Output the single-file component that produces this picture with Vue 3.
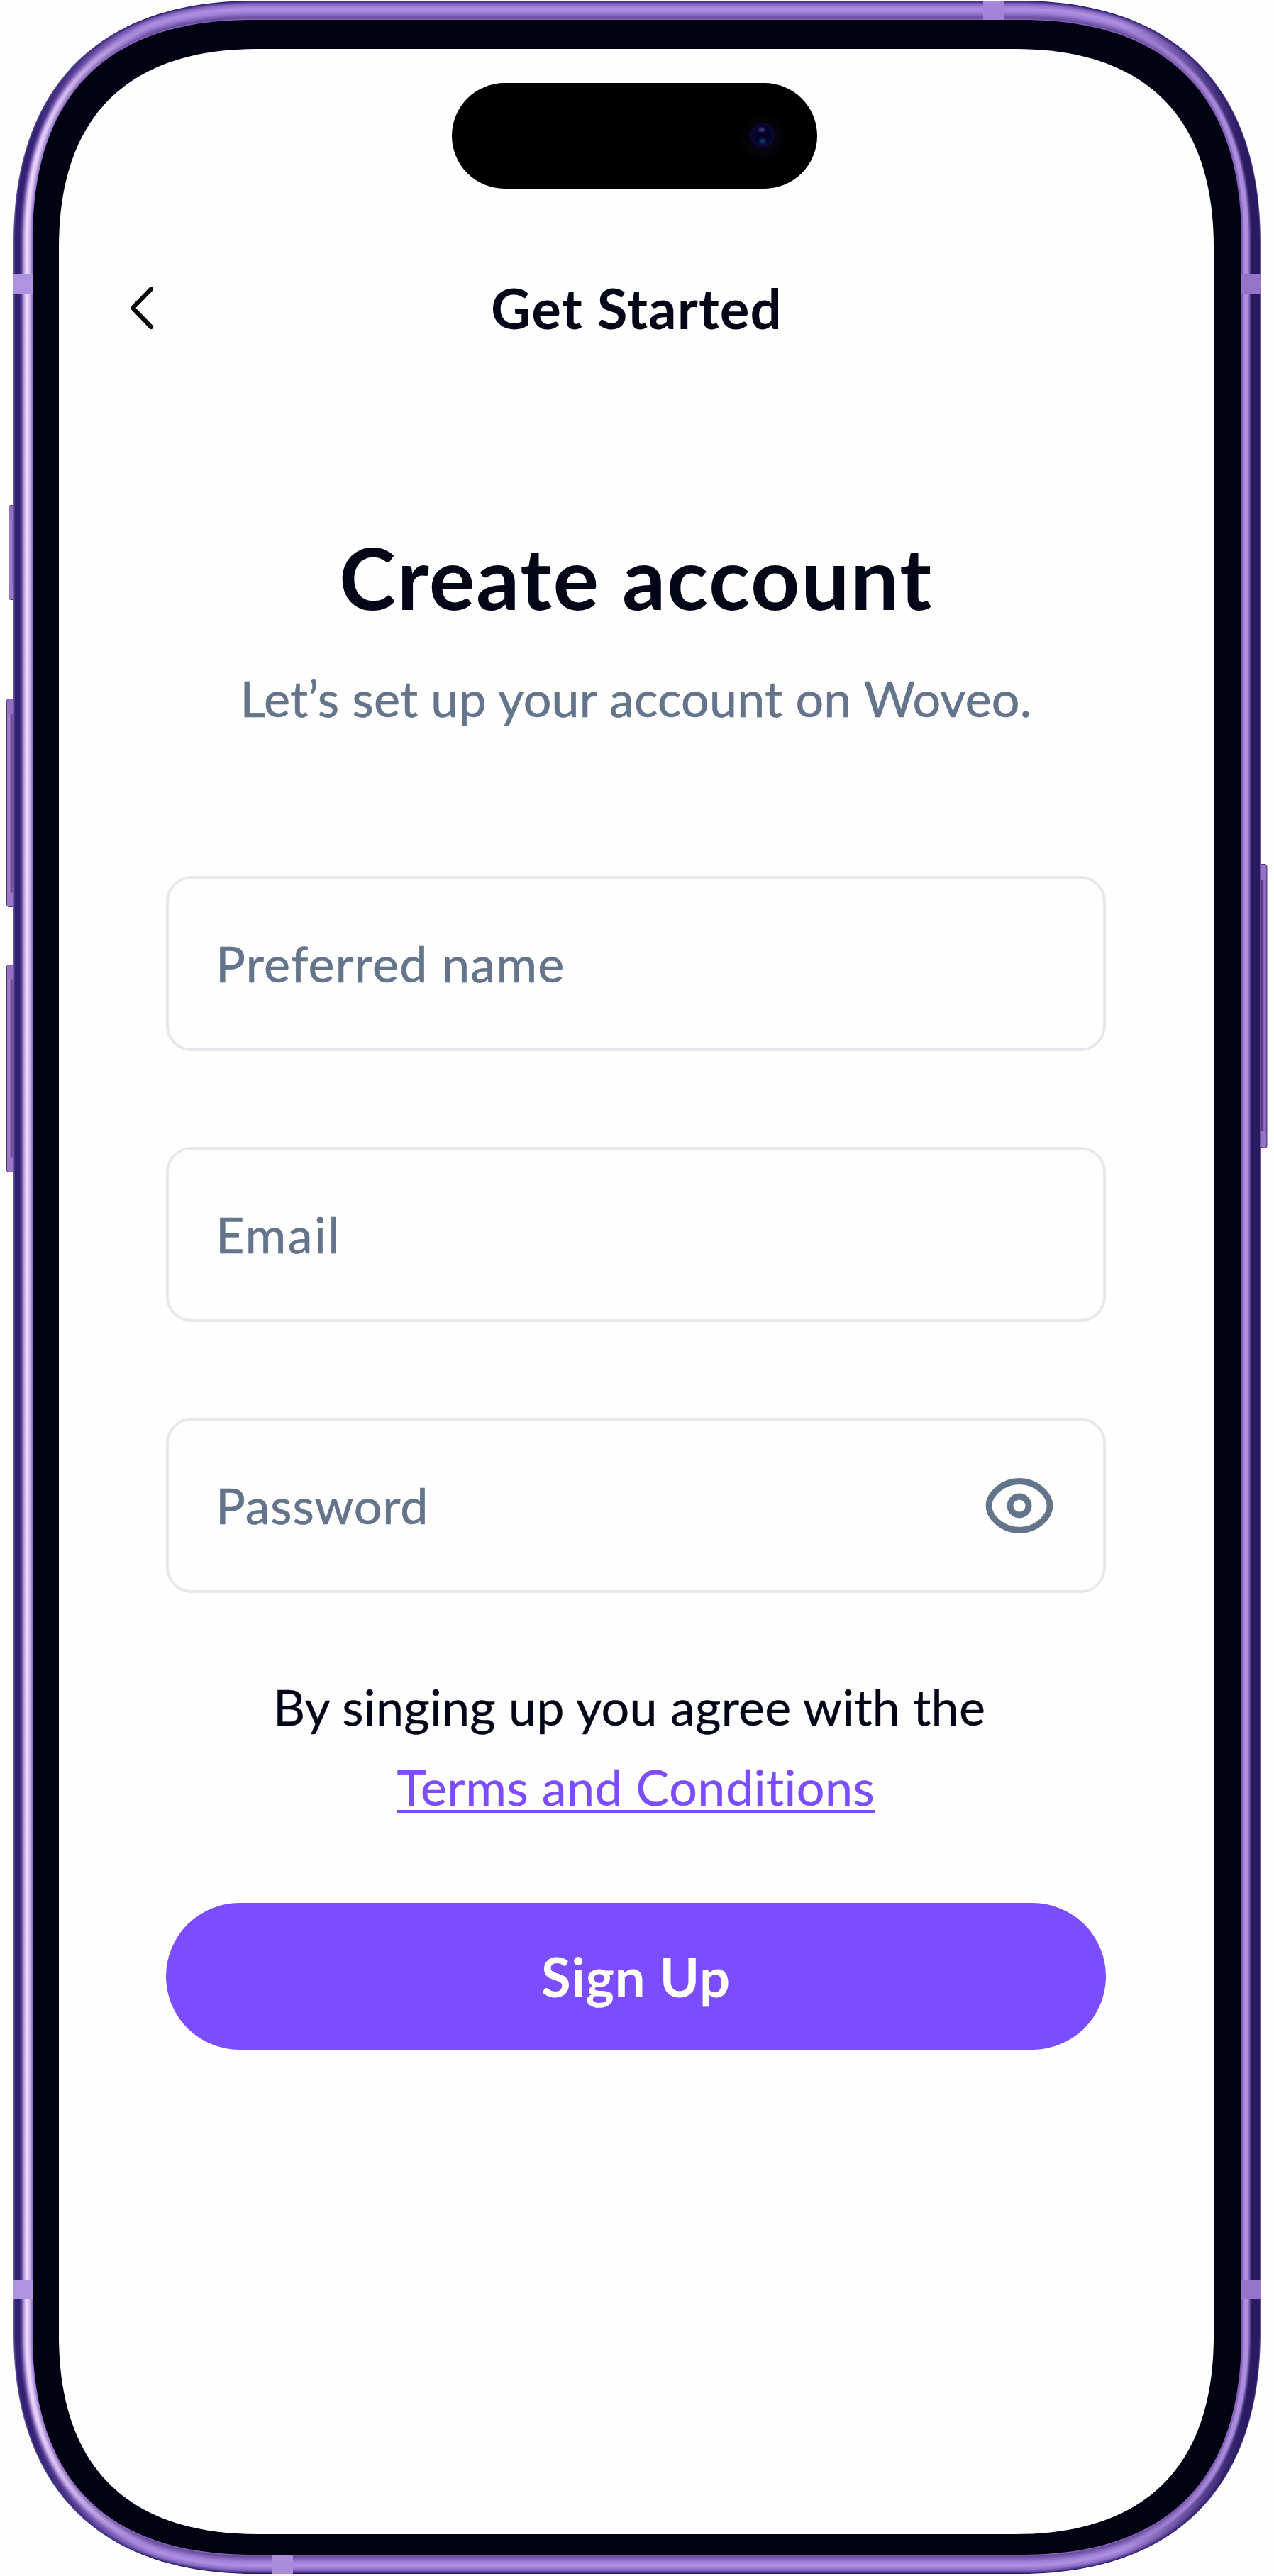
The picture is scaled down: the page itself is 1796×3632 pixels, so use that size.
<script setup>
const W = 1796
const H = 3632

// Rounded outline with continuous-curvature corners.
function outline(l, t, r, b, len, c) {
  return [
    `M${l} ${t + len}C${l} ${t + c} ${l + c} ${t} ${l + len} ${t}`,
    `H${r - len}C${r - c} ${t} ${r} ${t + c} ${r} ${t + len}`,
    `V${b - len}C${r} ${b - c} ${r - c} ${b} ${r - len} ${b}`,
    `H${l + len}C${l + c} ${b} ${l} ${b - c} ${l} ${b - len}Z`,
  ].join('')
}

// Metal tones from the outer edge inwards: [depth, r, g, b].
const leftTones = [[0, 100, 84, 165], [2, 50, 34, 112], [8, 50, 34, 116], [11, 96, 70, 155], [14, 175, 145, 215], [17, 234, 214, 250], [20, 234, 214, 250], [23, 198, 168, 235], [26, 150, 115, 200]]
const rightTones = [[0, 100, 80, 155], [1, 42, 26, 98], [12, 42, 26, 98], [15, 110, 85, 165], [17, 172, 140, 222], [22, 174, 142, 222], [24, 138, 106, 190], [26, 125, 92, 178]]
const capTones = [[0, 44, 29, 107], [2, 90, 66, 156], [5, 139, 108, 197], [11, 176, 144, 226], [16, 160, 130, 214], [20, 132, 102, 188], [24, 104, 74, 156], [26, 134, 102, 188]]

function tone(list, d) {
  for (let i = 1; i < list.length; i++) {
    if (d <= list[i][0]) {
      const a = list[i - 1]
      const b = list[i]
      const k = (d - a[0]) / (b[0] - a[0])
      return `rgb(${[1, 2, 3].map((n) => Math.round(a[n] + (b[n] - a[n]) * k)).join(',')})`
    }
  }
  return `rgb(${list[list.length - 1].slice(1).join(',')})`
}

const layers = Array.from({ length: 27 }, (_, d) => ({
  id: `metal${d}`,
  d: outline(19 + d, 1 + d, 1777 - d, 3629 - d, 340 - d * 1.1, 121 - d * 0.6),
  left: tone(leftTones, d),
  cap: tone(capTones, d),
  right: tone(rightTones, d),
}))
const bezel = outline(46, 28, 1750, 3602, 310, 105)
const screen = outline(83, 69, 1711, 3573, 280, 96)
const keys = [
  { x: 12.5, y: 712.5, h: 133 },
  { x: 9.5, y: 985.5, h: 293 },
  { x: 9.5, y: 1360.5, h: 292 },
]

const fields = [
  { label: 'Preferred name', name: 'name' },
  { label: 'Email', name: 'email' },
  { label: 'Password', name: 'password', eye: true },
]
</script>

<template>
  <main class="phone">
    <svg class="shell" :viewBox="`0 0 ${W} ${H}`" :width="W" :height="H" aria-hidden="true">
      <defs>
        <linearGradient v-for="l in layers" :id="l.id" :key="l.id" gradientUnits="userSpaceOnUse" x1="19" y1="0" x2="1777" y2="0">
          <stop offset="0.012" :stop-color="l.left" />
          <stop offset="0.11" :stop-color="l.cap" />
          <stop offset="0.89" :stop-color="l.cap" />
          <stop offset="0.988" :stop-color="l.right" />
        </linearGradient>
        <linearGradient id="keyLeft">
          <stop offset="0" stop-color="#8f77c4" />
          <stop offset="0.25" stop-color="#a583cf" />
          <stop offset="0.35" stop-color="#765098" />
          <stop offset="1" stop-color="#8058a4" />
        </linearGradient>
        <linearGradient id="keyRight">
          <stop offset="0" stop-color="#54347c" />
          <stop offset="0.6" stop-color="#5c3a82" />
          <stop offset="0.75" stop-color="#9a76c6" />
          <stop offset="1" stop-color="#7b5bb0" />
        </linearGradient>
        <radialGradient id="lens">
          <stop offset="0" stop-color="#02021c" />
          <stop offset="0.6" stop-color="#04032c" />
          <stop offset="0.85" stop-color="#0b0730" />
          <stop offset="1" stop-color="#020106" />
        </radialGradient>
        <radialGradient id="halo">
          <stop offset="0.3" stop-color="#0a0610" />
          <stop offset="1" stop-color="#000" />
        </radialGradient>
        <radialGradient id="glintTop">
          <stop offset="0" stop-color="#4a4480" />
          <stop offset="1" stop-color="#4a4480" stop-opacity="0" />
        </radialGradient>
        <radialGradient id="glintBottom">
          <stop offset="0" stop-color="#0b5668" />
          <stop offset="1" stop-color="#0b1668" stop-opacity="0" />
        </radialGradient>
      </defs>

      <g stroke="#4c347f">
        <g v-for="k in keys" :key="k.y">
          <rect :x="k.x" :y="k.y" width="16" :height="k.h" rx="3" fill="url(#keyLeft)" />
          <rect :x="k.x + 1" :y="k.y + 1" width="12" height="20" rx="2" fill="#9470c0" stroke="none" />
          <rect :x="k.x + 1" :y="k.y + k.h - 20" width="12" height="19" rx="2" fill="#9b78c8" stroke="none" />
        </g>
        <rect x="1770" y="1218.5" width="16" height="400" rx="3" fill="url(#keyRight)" />
        <rect x="1775" y="1220" width="10" height="21" rx="2" fill="#9472c4" stroke="none" />
        <rect x="1775" y="1595" width="10" height="22" rx="2" fill="#9472c4" stroke="none" />
      </g>

      <path v-for="l in layers" :key="l.id" :d="l.d" :fill="`url(#${l.id})`" />

      <rect x="1386" y="1" width="29" height="28" fill="#a484d8" />
      <rect x="384" y="3602" width="29" height="27" fill="#aa8cdb" />
      <rect x="19" y="386" width="27" height="28" fill="#ae93e0" />
      <rect x="19" y="3214" width="27" height="28" fill="#ae93e0" />
      <rect x="1750" y="386" width="27" height="28" fill="#9674ca" />
      <rect x="1750" y="3214" width="27" height="28" fill="#9674ca" />

      <path :d="bezel" fill="#010212" />
      <path :d="screen" fill="#fefefe" />

      <rect x="637" y="117" width="515" height="149" rx="74.5" fill="#000" />
      <circle cx="1075" cy="194" r="36" fill="url(#halo)" />
      <circle cx="1075" cy="191" r="19" fill="url(#lens)" />
      <ellipse cx="1074" cy="183" rx="7" ry="5" fill="url(#glintTop)" />
      <circle cx="1075" cy="199" r="7" fill="url(#glintBottom)" />
    </svg>

    <div class="content">
      <header class="bar">
        <svg class="back" width="40" height="62" viewBox="0 0 40 62" aria-label="Back">
          <path d="M32 3.500L6.200 30.200L32 57" fill="none" stroke="#06070f" stroke-width="6.2" stroke-linecap="round" stroke-linejoin="round" />
        </svg>
        <span class="bar-title">Get Started</span>
      </header>

      <h1 class="title">Create account</h1>
      <p class="lead">Let’s set up your account on Woveo.</p>

      <form class="form">
        <div v-for="f in fields" :key="f.name" class="field">
          <span :class="['label', f.name]">{{ f.label }}</span>
          <svg v-if="f.eye" width="96" height="80" viewBox="0 0 96 80" fill="none" stroke="#64748b" stroke-width="8.8">
            <path d="M48 5.500C73 5.500 91 25 91 40S73 74.500 48 74.500S5 55 5 40S23 5.500 48 5.500Z" />
            <circle cx="48" cy="40" r="13" />
          </svg>
        </div>
      </form>

      <p class="terms"><span class="agree">By singing up you agree with the</span><a class="link">Terms and Conditions</a></p>
      <div class="submit"><span>Sign Up</span></div>
    </div>
  </main>
</template>

<style>
body { background: #fefefe; }
</style>

<style scoped>
.phone {
  position: relative;
  width: 1796px;
  height: 3632px;
  overflow: hidden;
  font-family: Lato, "Open Sans", sans-serif;
  color: #020617;
}
.shell { position: absolute; inset: 0; display: block; }
.content {
  position: relative;
  box-sizing: border-box;
  height: 100%;
  padding: 383px 237px 0 234px;
  display: flex;
  flex-direction: column;
  white-space: nowrap;
}
.bar { position: relative; height: 100px; display: flex; align-items: center; justify-content: center; }
.back { position: absolute; left: -53px; top: 21px; }
.bar-title { margin: 2px 0 0 2px; font-size: 78px; font-weight: 700; letter-spacing: 1.1px; }
.title { margin: 266px 0 0; height: 130px; line-height: 130px; text-align: center; font-size: 121px; font-weight: 700; letter-spacing: 1.7px; }
.lead { margin: 40px 0 0; height: 130px; line-height: 130px; text-align: center; font-size: 70px; letter-spacing: 0.2px; color: #64748b; -webkit-text-stroke: 0.6px; }
.form { margin-top: 186px; display: flex; flex-direction: column; gap: 135px; }
.field {
  box-sizing: border-box;
  height: 247px;
  border: 4px solid #e5e9ee;
  border-radius: 36px;
  padding: 0 70px 0 66px;
  display: flex;
  align-items: center;
  justify-content: space-between;
  font-size: 70px;
  color: #64748b;
}
.label { margin-top: -2px; -webkit-text-stroke: 0.6px; }
.name { letter-spacing: 1.3px; }
.email { letter-spacing: 2.4px; }
.password { letter-spacing: 0.8px; }
.terms { margin: 104px 0 0; display: flex; flex-direction: column; align-items: center; font-size: 70px; line-height: 113px; -webkit-text-stroke: 0.4px; }
.agree { margin-right: 19px; letter-spacing: 0.25px; }
.link { color: #7c4dff; letter-spacing: 0.5px; font-variant-ligatures: none; text-decoration: underline; text-decoration-thickness: 4px; text-underline-offset: 6px; text-decoration-skip-ink: none; }
.submit {
  margin-top: 107px;
  height: 207px;
  border-radius: 104px;
  background: #7c4dff;
  color: #fff;
  display: flex;
  align-items: center;
  justify-content: center;
  font-size: 76px;
  font-weight: 700;
  letter-spacing: 0.9px;
}
</style>
